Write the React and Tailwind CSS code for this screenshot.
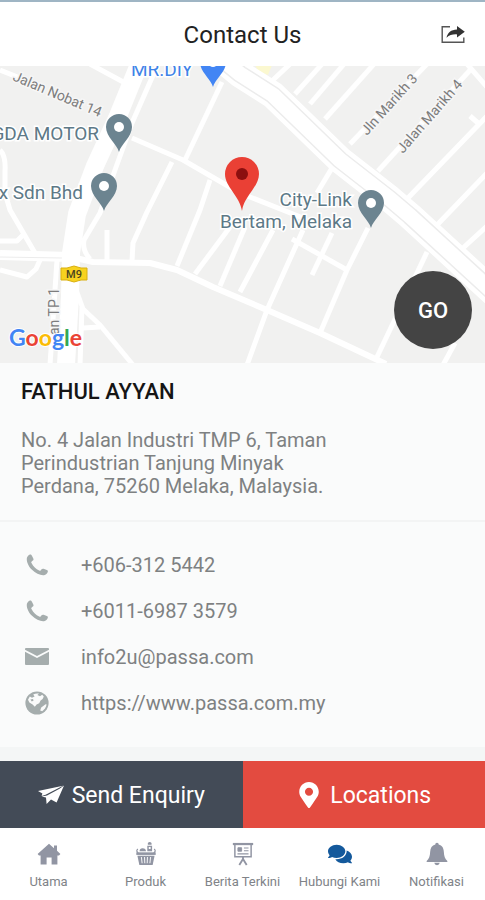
import { FaComments, FaMapMarkerAlt } from "react-icons/fa"

const sideStreets = [
  "M0 4 L40 20 M90 -2 L127 18",
  "M132 72 L183 94 L240 127 L303 152",
  "M222 16 L185 94",
  "M172 96 L147 146 L133 177 L132 195",
  "M210 114 L200 144 L177 200",
  "M230 161 L195 208",
  "M245 161 L220 220",
  "M273 164 L240 226",
  "M107 164 V194",
  "M303 164 L267 244 L247 299",
  "M292 173 L347 204",
  "M368 162 L347 204 L320 267",
  "M332 167 L312 209",
  "M427 186 L377 291",
  "M455 277 L443 299",
  "M335 97 L317 127",
  "M273 14 L290 -2",
  "M295 28 L322 -2",
  "M310 38 L344 -2",
  "M325 53 L374 -2",
  "M350 78 L427 -2",
  "M378 105 L472 2",
  "M407 133 L487 50",
  "M437 159 L487 107",
  "M463 182 L487 160",
  "M467 -2 L487 21",
  "M470 50 L478 57",
  "M0 84 Q6 90 5 105 L5 127 L10 144 L35 187",
  "M0 175 H17 L25 167",
  "M0 204 L27 211 L36 203 L40 194",
  "M57 194 L50 299",
  "M82 241 L80 299 M83 262 L100 261",
  "M75 221 L83 243 L100 259 L133 299",
]

const contacts = [
  { id: 1, icon: PhoneIcon, text: "+606-312 5442", href: "tel:+6063125442" },
  { id: 2, icon: PhoneIcon, text: "+6011-6987 3579", href: "tel:+601169873579" },
  { id: 3, icon: MailIcon, text: "info2u@passa.com", href: "mailto:info2u@passa.com" },
  { id: 4, icon: GlobeIcon, text: "https://www.passa.com.my", href: "https://www.passa.com.my" },
]

const tabs = [
  { label: "Utama", icon: HomeIcon },
  { label: "Produk", icon: BasketIcon },
  { label: "Berita Terkini", icon: BoardIcon },
  { label: "Hubungi Kami", icon: FaComments, active: true },
  { label: "Notifikasi", icon: BellIcon },
]

function ShareIcon({ className }) {
  return (
    <svg viewBox="0 0 24 20" className={className} fill="none">
      <path d="M9 1.8 H1.2 V17.2 H22.8 V12.5" stroke="#555" strokeWidth="1.4" />
      <path d="M16 1 L23.8 6.8 L16 12.6 V9.4 C11.5 9.2 8.5 10 5.5 12.8 C6.5 7.6 10 4.6 16 4.4 Z" fill="#333" />
    </svg>
  )
}

function PhoneIcon({ className }) {
  return (
    <svg viewBox="0 0 24 24" className={className} fill="currentColor">
      <path d="M2 4.4 C2.6 2.8 4 1.6 5.2 1.4 C6 1.3 6.4 1.8 6.8 2.6 L8.3 5.4 C8.8 6.4 8.5 7.1 7.8 7.6 L6.7 8.4 C6.1 8.9 6.2 9.4 6.5 10 C8.3 13.4 10.9 16 14.2 17.6 C14.9 18 15.4 17.9 15.8 17.3 L16.6 16.3 C17.1 15.7 17.8 15.5 18.6 15.8 L21.8 17.1 C22.7 17.5 23.1 18 22.8 18.8 C22.3 20.4 20.9 21.8 19 22.2 C15.7 22.7 10.6 20.3 7 16.8 C3.3 13.1 1 7.8 2 4.4 Z" />
    </svg>
  )
}

function MailIcon({ className }) {
  return (
    <svg viewBox="0 0 24 24" className={className} fill="currentColor">
      <path d="M1 3 H23 Q24 3 24 4 V4.8 L12 10.9 L0 4.8 V4 Q0 3 1 3 Z" />
      <path d="M0 6.8 L12 13 L24 6.8 V19 Q24 20 23 20 H1 Q0 20 0 19 Z" />
    </svg>
  )
}

function GlobeIcon({ className }) {
  return (
    <svg viewBox="0 0 24 24" className={className}>
      <circle cx="12" cy="12" r="11.6" fill="currentColor" />
      <path d="M8.2 3.4 C10 2.5 12 2.3 14 2.6 L12.4 4 L15 5.2 L17.2 3.8 L18.8 5.6 L17.6 8 L15.6 9.6 L14.2 12.2 L11.6 13.4 L9.8 15.8 L7.6 13.4 L4.4 11.4 L3 8.8 L4.8 5.6 L7 6.8 L9.6 5.6 Z" fill="#fafbfb" />
      <path d="M20.6 13.2 L21.6 13.6 C21.1 16.4 19.4 18.8 17.2 20.2 L15.2 19.6 L16.2 16.6 Z" fill="#fafbfb" />
      <path d="M5.4 8.4 L8 8 L8.6 9.6 L6.8 10.4 Z" fill="currentColor" />
    </svg>
  )
}

function PlaneIcon({ className }) {
  return (
    <svg viewBox="0 0 26 20" className={className} fill="currentColor">
      <path d="M0 6 L25 0.8 L7.6 9.8 L3.6 11 L4.4 8.6 Z" />
      <path d="M26 0.6 L18.6 17.4 L13 14.6 L8.6 19 L8 12.6 L3.6 11.6 L9 10.6 L22 3.6 L9.8 12.4 Z" />
    </svg>
  )
}

function HomeIcon({ className }) {
  return (
    <svg viewBox="0 0 24 24" className={className} fill="currentColor">
      <path d="M12 1.8 L17 6.2 V3.6 H20 V8.8 L23.4 12 L22 13.4 H20.4 V22.4 H14.6 V15.4 H9.6 V22.4 H3.6 V13.4 H2 L0.6 12 Z" />
    </svg>
  )
}

function BasketIcon({ className }) {
  return (
    <svg viewBox="0 0 24 26" className={className} fill="currentColor">
      <path d="M14 1 Q16 -0.8 18 1 V3 H14 Z M13.4 4 H18.6 V10 H13.4 Z" />
      <path d="M15 5.4 H17 V7.6 H15 Z" fill="#fff" />
      <path d="M5 10 Q5 6.8 8.3 6.8 Q11.8 6.8 12 10 Z" />
      <path d="M3.6 12 Q0.6 9.5 3.2 7.6 M20.4 12 Q23.4 9.5 20.8 7.6" fill="none" stroke="currentColor" strokeWidth="1.3" />
      <path d="M1.5 11.2 H22.5 V14 H1.5 Z" />
      <path d="M2.7 15 H21.3 L19.2 25 H4.8 Z" />
      <path d="M7 16.3 L7.8 23 M10.4 16.3 L10.7 23 M13.6 16.3 L13.3 23 M17 16.3 L16.2 23" stroke="#fff" strokeWidth="1" />
    </svg>
  )
}

function BoardIcon({ className }) {
  return (
    <svg viewBox="0 0 24 26" className={className} fill="none" stroke="currentColor">
      <path d="M1 2.2 H23" strokeWidth="2.4" />
      <path d="M3.2 3 V16 H20.8 V3" strokeWidth="1.6" />
      <path d="M6.5 6.2 H10.5 V10 H6.5 Z" fill="currentColor" strokeWidth="1" />
      <path d="M13 6.5 H18 M13 9.5 H18 M6 12.8 H18" strokeWidth="1.3" />
      <path d="M12 16 V20 M12 18.5 L8 25 M12 18.5 L16 25" strokeWidth="2" />
    </svg>
  )
}

function BellIcon({ className }) {
  return (
    <svg viewBox="0 0 24 26" className={className} fill="currentColor">
      <path d="M12 0.8 C13.2 0.8 13.8 1.6 13.8 2.8 C17.6 3.8 19.2 6.8 19.4 10.5 C19.6 15 20.6 18.2 23.2 20.5 V21.8 H0.8 V20.5 C3.4 18.2 4.4 15 4.6 10.5 C4.8 6.8 6.4 3.8 10.2 2.8 C10.2 1.6 10.8 0.8 12 0.8 Z" />
      <path d="M9 22.6 H15 Q14.5 25.2 12 25.2 Q9.5 25.2 9 22.6 Z" />
    </svg>
  )
}

function Pin({ x, y, fill, hole }) {
  return (
    <g transform={`translate(${x} ${y})`}>
      <path d="M0 25 C-2 17 -13 10 -13 0 A13 13 0 0 1 13 0 C13 10 2 17 0 25 Z" fill={fill} />
      <circle r="5" fill={hole} />
    </g>
  )
}

function Map() {
  return (
    <svg
      viewBox="0 0 485 297"
      preserveAspectRatio="xMidYMid slice"
      className="block w-full h-[297px] bg-[#f1f1f0] font-['Roboto',sans-serif]"
      role="img"
      aria-label="Map"
    >
      <rect width="485" height="297" fill="#f1f1f0" />
      <path d="M255 -1 L272 -1 L268 9 L258 5 Z" fill="#fbf8d0" />
      <g fill="none" stroke="#fff" strokeLinejoin="round">
        {sideStreets.map((d) => (
          <path key={d} d={d} strokeWidth="5" />
        ))}
        <path d="M0 189 L67 190 L93 196 L150 197 L177 204 L213 221 L267 244 L320 267 L386 298" strokeWidth="6" />
        <path d="M0 189 L70 191" strokeWidth="10" />
        <path d="M0 191 L62 192" stroke="#ececec" strokeWidth="1" />
        <path d="M158 -2 L132 57 L115 104 L100 147 L84 174 Q82 184 90 193" strokeWidth="5" />
        <path d="M140 -4 L118 50 L95 100 L77 148 L71 187 L70 230 L66 299" strokeWidth="18" />
        <path d="M218 -10 L240 8 L273 29 L307 62 L340 94 L390 133 L410 150 L495 228" strokeWidth="27" />
        <path d="M218 -10 L240 8 L273 29 L307 62 L340 94 L390 133 L410 150 L495 228" stroke="#ececec" strokeWidth="18" />
        <path d="M218 -10 L240 8 L273 29 L307 62 L340 94 L390 133 L410 150 L495 228" strokeWidth="15" />
      </g>

      <g fill="#7d7d7d" stroke="#f6f6f6" strokeWidth="3" paintOrder="stroke" fontSize="14">
        <text transform="translate(12 14) rotate(23)">Jalan Nobat 14</text>
        <text transform="translate(367 70) rotate(-48)">Jln Marikh 3</text>
        <text transform="translate(403 88) rotate(-49)">Jalan Marikh 4</text>
        <text transform="translate(59 269) rotate(-90)">an TP 1</text>
      </g>

      <Pin x="119" y="61" fill="#6c8490" hole="#fff" />
      <Pin x="104" y="120" fill="#6c8490" hole="#fff" />
      <Pin x="371" y="137" fill="#6c8490" hole="#fff" />
      <Pin x="213" y="-4" fill="#4285f4" hole="#fff" />
      <path d="M242 145 C240 130 225 121 225 108 A17 17 0 0 1 259 108 C259 121 244 130 242 145 Z" fill="#ea4035" />
      <circle cx="242" cy="108" r="6" fill="#8c0f0f" />

      <g fill="#5d7987" stroke="#fff" strokeWidth="3" paintOrder="stroke" fontSize="19" textAnchor="end">
        <text x="193" y="10" fill="#3f83e8">MR.DIY</text>
        <text x="99" y="74">GDA MOTOR</text>
        <text x="83" y="133">x Sdn Bhd</text>
        <text x="352" y="140">City-Link</text>
        <text x="352" y="162">Bertam, Melaka</text>
      </g>

      <path d="M61 202 L67 202 L74 200 L81 202 L87 202 V214 L81 214 L74 216 L67 214 L61 214 Z" fill="#f7d21f" stroke="#d9b010" strokeWidth="1" />
      <text x="74" y="212" fontSize="11" fontWeight="500" fill="#4a4420" textAnchor="middle">M9</text>

      <text x="9" y="280" fontSize="23" fontWeight="700" stroke="#fff" strokeWidth="2" paintOrder="stroke" className="font-['Lato',sans-serif]">
        <tspan fill="#4285f4">G</tspan><tspan fill="#ea4335">o</tspan><tspan fill="#fbbc05">o</tspan><tspan fill="#4285f4">g</tspan><tspan fill="#34a853">l</tspan><tspan fill="#ea4335">e</tspan>
      </text>
    </svg>
  )
}

function App() {
  return (
    <div className="min-h-screen flex flex-col bg-white font-['Roboto',sans-serif]">
      <header className="grid grid-cols-[1fr_auto_1fr] items-center h-[66px] pt-0.5 border-t-2 border-[#9fb5c4] px-5">
        <h1 className="col-start-2 text-2xl text-[#222]">Contact Us</h1>
        <button type="button" aria-label="Share" className="justify-self-end">
          <ShareIcon className="w-6 h-5" />
        </button>
      </header>

      <div className="relative">
        <Map />
        <button type="button" className="absolute right-[13px] bottom-3.5 size-[78px] rounded-full bg-[#444] text-white text-[22px] font-medium">
          GO
        </button>
      </div>

      <main className="grow bg-[#fafbfb] text-xl text-[#7e8182]">
        <section className="px-[21px] pt-[15px] pb-[22px] border-b-2 border-[#f3f4f4]">
          <h2 className="text-[22px] leading-7 font-medium text-[#151515]">FATHUL AYYAN</h2>
          <address className="mt-[23px] not-italic leading-[23px]">
            No. 4 Jalan Industri TMP 6, Taman<br />
            Perindustrian Tanjung Minyak<br />
            Perdana, 75260 Melaka, Malaysia.
          </address>
        </section>
        <ul className="px-[25px] py-5">
          {contacts.map(({ id, icon: Icon, text, href }) => (
            <li key={id}>
              <a href={href} className="flex items-center gap-8 h-[46px]">
                <Icon className="size-6 text-[#a5adad]" />
                <span>{text}</span>
              </a>
            </li>
          ))}
        </ul>
      </main>

      <div className="h-3.5 bg-[#f4f6f6]"></div>
      <div className="grid grid-cols-2 h-[67px] text-[23px] text-white">
        <button type="button" className="flex items-center justify-center gap-2 pt-1 bg-[#434b57]">
          <PlaneIcon className="w-[26px] h-5 mb-1" />
          Send Enquiry
        </button>
        <button type="button" className="flex items-center justify-center gap-2 pt-1 bg-[#e34b40]">
          <FaMapMarkerAlt className="size-[26px] mb-1" />
          Locations
        </button>
      </div>

      <nav className="grid grid-cols-5 h-[72px] pt-3.5 text-[13px] text-[#808388]">
        {tabs.map(({ label, icon: Icon, active }) => (
          <a key={label} href="#" className="flex flex-col items-center gap-1.5 whitespace-nowrap">
            <Icon className={active ? "size-6 text-[#14599c]" : "size-6 text-[#9195a3]"} />
            <span>{label}</span>
          </a>
        ))}
      </nav>
    </div>
  )
}

export default App
